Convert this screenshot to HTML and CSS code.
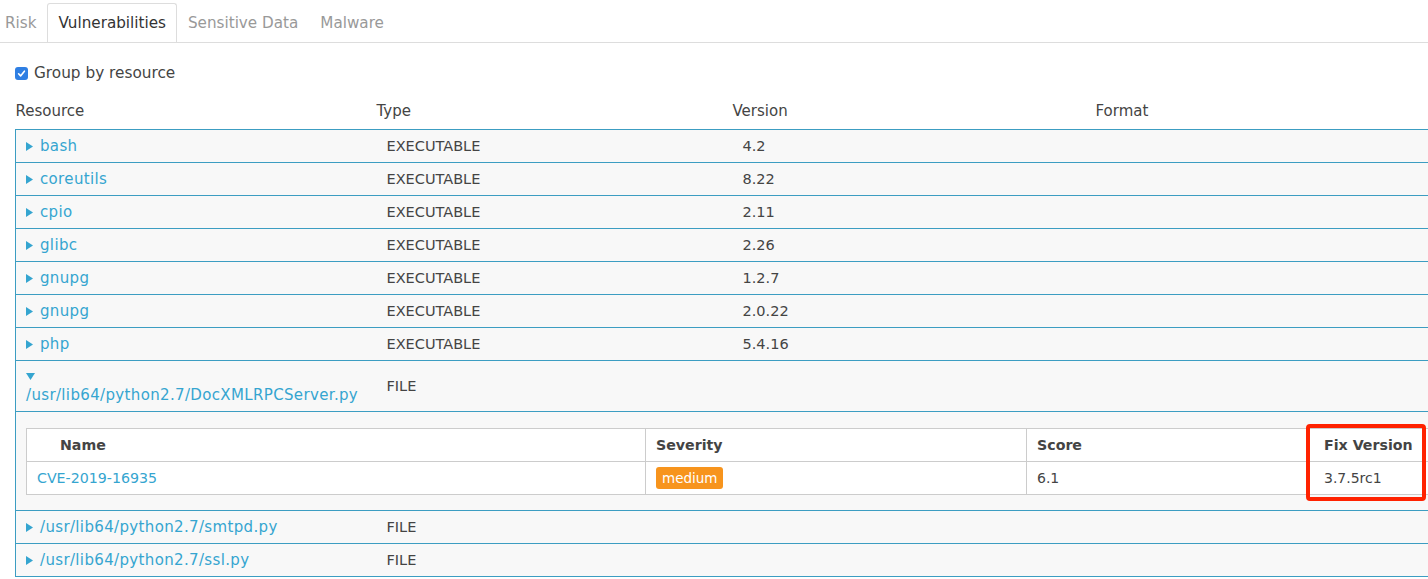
FILE: index.html
```html
<!DOCTYPE html>
<html>
<head>
<meta charset="utf-8">
<link rel="stylesheet" href="styles.css">
</head>
<body>
<ul class="tabs">
  <li class="tab">Risk</li>
  <li class="tab active">Vulnerabilities</li>
  <li class="tab">Sensitive Data</li>
  <li class="tab">Malware</li>
</ul>
<label class="group">
  <span class="cb"><svg width="13" height="13" viewBox="0 0 13 13"><rect width="13" height="13" rx="3" fill="#2f7fe3"/><path d="M3.6 6.8 L5.6 8.9 L9.4 4.2" fill="none" stroke="#fff" stroke-width="1.6" stroke-linecap="round" stroke-linejoin="round"/></svg></span>
  <span>Group by resource</span>
</label>
<table class="res">
  <colgroup><col class="c1"><col class="c2"><col class="c3"><col class="c4"></colgroup>
  <thead>
    <tr><th>Resource</th><th>Type</th><th class="hv">Version</th><th class="hf">Format</th></tr>
  </thead>
  <tbody>
    <tr><td class="name"><span class="tri"><svg width="7" height="9" viewBox="0 0 7 9"><polygon points="0,0 7,4.5 0,9" fill="#35a5d0"/></svg></span><a>bash</a></td><td>EXECUTABLE</td><td>4.2</td><td></td></tr>
    <tr><td class="name"><span class="tri"><svg width="7" height="9" viewBox="0 0 7 9"><polygon points="0,0 7,4.5 0,9" fill="#35a5d0"/></svg></span><a>coreutils</a></td><td>EXECUTABLE</td><td>8.22</td><td></td></tr>
    <tr><td class="name"><span class="tri"><svg width="7" height="9" viewBox="0 0 7 9"><polygon points="0,0 7,4.5 0,9" fill="#35a5d0"/></svg></span><a>cpio</a></td><td>EXECUTABLE</td><td>2.11</td><td></td></tr>
    <tr><td class="name"><span class="tri"><svg width="7" height="9" viewBox="0 0 7 9"><polygon points="0,0 7,4.5 0,9" fill="#35a5d0"/></svg></span><a>glibc</a></td><td>EXECUTABLE</td><td>2.26</td><td></td></tr>
    <tr><td class="name"><span class="tri"><svg width="7" height="9" viewBox="0 0 7 9"><polygon points="0,0 7,4.5 0,9" fill="#35a5d0"/></svg></span><a>gnupg</a></td><td>EXECUTABLE</td><td>1.2.7</td><td></td></tr>
    <tr><td class="name"><span class="tri"><svg width="7" height="9" viewBox="0 0 7 9"><polygon points="0,0 7,4.5 0,9" fill="#35a5d0"/></svg></span><a>gnupg</a></td><td>EXECUTABLE</td><td>2.0.22</td><td></td></tr>
    <tr><td class="name"><span class="tri"><svg width="7" height="9" viewBox="0 0 7 9"><polygon points="0,0 7,4.5 0,9" fill="#35a5d0"/></svg></span><a>php</a></td><td>EXECUTABLE</td><td>5.4.16</td><td></td></tr>
    <tr class="open"><td class="name"><span class="tri-down"><svg width="9" height="7" viewBox="0 0 9 7"><polygon points="0,0 9,0 4.5,7" fill="#35a5d0"/></svg></span><a class="path">/usr/lib64/python2.7/DocXMLRPCServer.py</a></td><td>FILE</td><td></td><td></td></tr>
    <tr class="detail">
      <td colspan="4">
        <table class="vulns">
          <colgroup><col class="v1"><col class="v2"><col class="v3"><col class="v4"></colgroup>
          <thead>
            <tr><th class="vn">Name</th><th>Severity</th><th>Score</th><th class="fix">Fix Version<span class="hl"></span></th></tr>
          </thead>
          <tbody>
            <tr><td><a class="cve">CVE-2019-16935</a></td><td><span class="badge">medium</span></td><td>6.1</td><td class="fixv">3.7.5rc1</td></tr>
          </tbody>
        </table>
      </td>
    </tr>
    <tr><td class="name"><span class="tri"><svg width="7" height="9" viewBox="0 0 7 9"><polygon points="0,0 7,4.5 0,9" fill="#35a5d0"/></svg></span><a>/usr/lib64/python2.7/smtpd.py</a></td><td>FILE</td><td></td><td></td></tr>
    <tr><td class="name"><span class="tri"><svg width="7" height="9" viewBox="0 0 7 9"><polygon points="0,0 7,4.5 0,9" fill="#35a5d0"/></svg></span><a>/usr/lib64/python2.7/ssl.py</a></td><td>FILE</td><td></td><td></td></tr>
  </tbody>
</table>
</body>
</html>
```

FILE: styles.css
```css
html, body {
  margin: 0;
  padding: 0;
  background: #fff;
  overflow: hidden;
}
body {
  font-family: "DejaVu Sans", "Liberation Sans", sans-serif;
  font-size: 14.5px;
  color: #444;
  width: 1428px;
  height: 579px;
}
.tabs {
  list-style: none;
  margin: 0;
  padding: 3px 0 0 0;
  display: flex;
  border-bottom: 1px solid #ddd;
  margin-left: -6px;
  width: 1434px;
}
.tab {
  padding: 8px 10px;
  line-height: 22px;
  color: #999;
  border: 1px solid transparent;
  border-bottom: none;
  border-radius: 3px 3px 0 0;
  font-size: 15.2px;
}
.tab.active {
  color: #333;
  border-color: #ddd;
}
.group {
  display: flex;
  align-items: center;
  gap: 6px;
  margin: 20px 0 0 15px;
  height: 20px;
  font-size: 15.3px;
  color: #444;
}
.cb {
  display: flex;
}
.res {
  border-collapse: collapse;
  margin: 8px 0 0 15px;
  width: 1440px;
  table-layout: fixed;
}
.c1 { width: 361px; }
.c2 { width: 356px; }
.c3 { width: 363px; }
.c4 { width: 360px; }
.res > thead th {
  text-align: left;
  font-weight: normal;
  height: 37px;
  padding: 1px 0 0 0;
  vertical-align: middle;
  font-size: 15px;
  color: #444;
}
.res > tbody > tr > td {
  background: #f8f8f8;
  border-top: 1px solid #3c9dc2;
  border-bottom: 1px solid #3c9dc2;
  padding: 6px 10px;
  line-height: 20px;
  vertical-align: middle;
  white-space: nowrap;
}
.res > tbody > tr > td:first-child {
  border-left: 1px solid #3c9dc2;
}
a {
  color: #35a5d0;
  text-decoration: none;
}
.name a {
  font-size: 15px;
  letter-spacing: 0.35px;
}
.tri {
  display: inline-block;
  width: 14px;
  vertical-align: 0;
}
.tri svg { display: block; }
.open td.name {
  white-space: normal;
}
.tri-down {
  display: block;
  height: 18px;
  padding-top: 6px;
  box-sizing: border-box;
}
.tri-down svg { display: block; }
.path { display: block; }
.res > tbody > tr.detail > td {
  padding: 16px 0 15px 10px;
}
.vulns {
  border-collapse: collapse;
  table-layout: fixed;
  width: 1418px;
  background: #fff;
  font-size: 14px;
}
.v1 { width: 619px; }
.v2 { width: 381px; }
.v3 { width: 283px; }
.v4 { width: 135px; }
.vulns th, .vulns td {
  border: 1px solid #ccc;
  height: 32px;
  padding: 0 10px;
  text-align: left;
  vertical-align: middle;
  line-height: 20px;
}
.vulns td { font-size: 14px; }
.vulns .cve { font-size: 14.2px; }
.vulns th {
  font-weight: 700;
  font-size: 14.2px;
  color: #444;
}
.vulns th.vn { padding-left: 33px; }
.vulns th.fix, .vulns td.fixv { padding-left: 14px; }
.vulns th.fix { position: relative; }
.hl {
  position: absolute;
  left: -4px;
  top: -5px;
  width: 120px;
  height: 77px;
  box-sizing: border-box;
  border: 4px solid #ff2200;
  border-radius: 4px;
}
.badge {
  display: inline-block;
  background: #f7941d;
  color: #fff;
  border-radius: 3px;
  padding: 0 6px;
  line-height: 22px;
  font-size: 13.5px;
}
```
